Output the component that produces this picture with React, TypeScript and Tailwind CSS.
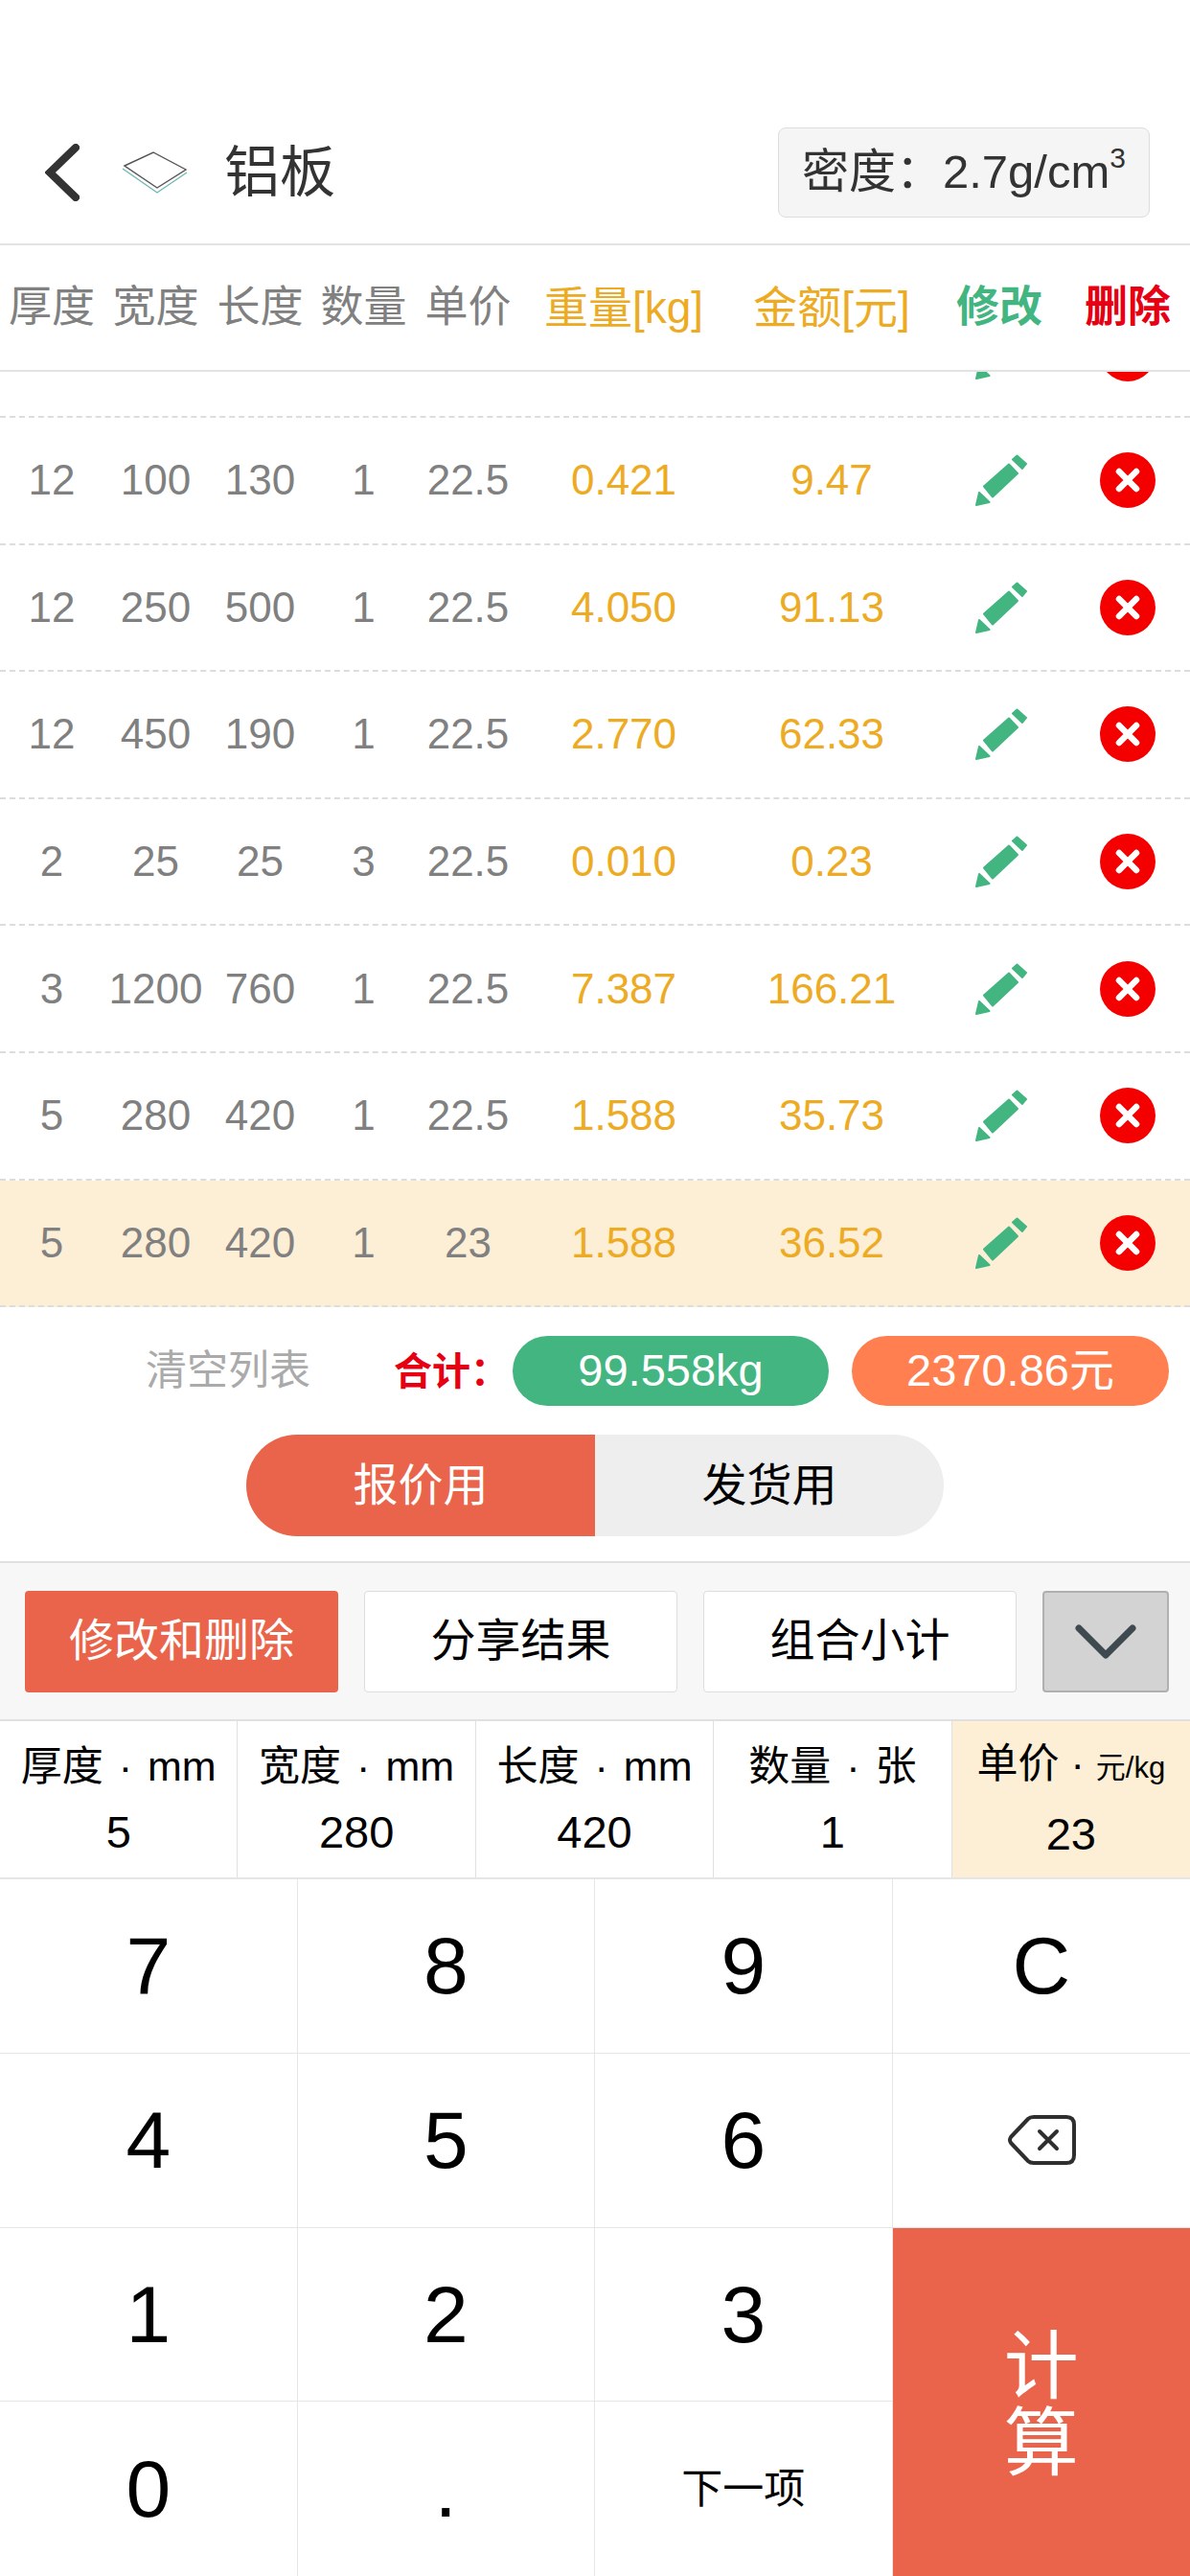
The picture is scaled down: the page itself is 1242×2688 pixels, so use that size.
const rows = [
  { t: '12', w: '100', l: '130', n: '1', p: '22.5', kg: '0.421', amt: '9.47' },
  { t: '12', w: '250', l: '500', n: '1', p: '22.5', kg: '4.050', amt: '91.13' },
  { t: '12', w: '450', l: '190', n: '1', p: '22.5', kg: '2.770', amt: '62.33' },
  { t: '2', w: '25', l: '25', n: '3', p: '22.5', kg: '0.010', amt: '0.23' },
  { t: '3', w: '1200', l: '760', n: '1', p: '22.5', kg: '7.387', amt: '166.21' },
  { t: '5', w: '280', l: '420', n: '1', p: '22.5', kg: '1.588', amt: '35.73' },
  { t: '5', w: '280', l: '420', n: '1', p: '23', kg: '1.588', amt: '36.52', active: true },
];

const cols = 'grid grid-cols-[108px_109px_109px_107px_111px_214px_220px_134px_130px] items-center text-center';

const PencilIcon = () => (
  <svg viewBox="0 0 54 54" className="w-[54px] h-[54px] mx-auto" fill="#43b581" stroke="#43b581" strokeWidth="2" strokeLinejoin="round">
    <path d="M1 53 L4 40 L14.5 50 Z" />
    <path d="M9 33.5 L35 10.5 L44 20 L18 44.5 Z" />
    <path d="M39 5.5 L43.5 1.5 L53 10 L49 15 Z" />
  </svg>
);

const CloseIcon = () => (
  <svg viewBox="0 0 58 58" className="w-[58px] h-[58px] mx-auto">
    <circle cx="29" cy="29" r="29" fill="#f50000" />
    <path d="M20 20 L38 38 M38 20 L20 38" stroke="#fff" strokeWidth="6.5" strokeLinecap="round" />
  </svg>
);

const Row = ({ r }: { r: (typeof rows)[number] }) => (
  <div className={`${cols} h-[132.6px] border-b-2 border-dashed border-[#dddddd] text-[44px] text-[#808080] ${r.active ? 'bg-[#fdeed6]' : ''}`}>
    <div>{r.t}</div>
    <div>{r.w}</div>
    <div>{r.l}</div>
    <div>{r.n}</div>
    <div>{r.p}</div>
    <div className="text-[#edab24]">{r.kg}</div>
    <div className="text-[#edab24]">{r.amt}</div>
    <div><PencilIcon /></div>
    <div><CloseIcon /></div>
  </div>
);

const inputs = [
  { label: '厚度', unit: 'mm', value: '5' },
  { label: '宽度', unit: 'mm', value: '280' },
  { label: '长度', unit: 'mm', value: '420' },
  { label: '数量', unit: '张', value: '1' },
];

const Key = ({ children, className = '' }: { children: React.ReactNode; className?: string }) => (
  <div className={`flex items-center justify-center border-b border-r border-[#e5e5e5] text-[84px] text-black ${className}`}>
    {children}
  </div>
);

export default function App() {
  return (
    <div className="w-[1242px] h-[2688px] overflow-hidden bg-white [font-family:'Liberation_Sans','Noto_Sans_CJK_SC',sans-serif]">
      {/* Header */}
      <div className="flex items-center h-[256px] pt-[105px] pl-[47px] pr-[42px] border-b-2 border-[#e3e3e3]">
        <svg viewBox="0 0 36 60" className="w-[36px] h-[60px]" fill="none" stroke="#333" strokeWidth="8" strokeLinecap="round">
          <path d="M32 4 L5 30 L32 56" />
        </svg>
        <svg viewBox="0 0 70 44" className="ml-[44px] w-[70px] h-[44px]" fill="none" strokeWidth="1.4">
          <path d="M3 15 L33 1 L67 19 L37 38 Z" stroke="#555" />
          <path d="M1 18 L37 43 L68 22" stroke="#6fb9b4" />
        </svg>
        <div className="ml-[37px] text-[58px] text-[#333333]">铝板</div>
        <div className="ml-auto flex items-center justify-center w-[388px] h-[94px] rounded-lg border border-[#dddddd] bg-[#f5f5f5] text-[49px] text-[#333333] whitespace-nowrap">
          密度：2.7g/cm<sup className="text-[30px]">3</sup>
        </div>
      </div>

      {/* Table head */}
      <div className={`${cols} h-[132px] border-b-2 border-[#e3e3e3] text-[45px] text-[#808080] whitespace-nowrap`}>
        <div>厚度</div>
        <div>宽度</div>
        <div>长度</div>
        <div>数量</div>
        <div>单价</div>
        <div className="text-[#edab24] text-[46px]">重量[kg]</div>
        <div className="text-[#edab24] text-[46px]">金额[元]</div>
        <div className="text-[#43b581] font-bold -ml-[4px]">修改</div>
        <div className="text-[#e60012] font-bold">删除</div>
      </div>

      {/* List, scrolled so only the icons of the row above show */}
      <div className="h-[976px] overflow-hidden">
        <div className="h-[48px] overflow-hidden flex flex-col justify-end">
          <div className={`${cols} shrink-0 h-[132.6px] border-b-2 border-dashed border-[#dddddd]`}>
            <div className="col-start-8"><PencilIcon /></div>
            <div><CloseIcon /></div>
          </div>
        </div>
        {rows.map((r, i) => (
          <Row key={i} r={r} />
        ))}
      </div>

      {/* Totals */}
      <div className="flex items-center h-[103px] pt-[30px] pl-[152px] pr-[22px] whitespace-nowrap">
        <div className="text-[43px] text-[#aaaaaa]">清空列表</div>
        <div className="ml-[87px] text-[40px] font-bold text-[#e60012]">合计：</div>
        <div className="ml-auto flex gap-[24px]">
          <div className="flex items-center justify-center w-[330px] h-[73px] rounded-[37px] bg-[#43b581] text-[47px] text-white">99.558kg</div>
          <div className="flex items-center justify-center w-[331px] h-[73px] rounded-[37px] bg-[#ff7f50] text-[47px] text-white">2370.86元</div>
        </div>
      </div>

      {/* Usage toggle */}
      <div className="flex justify-center mt-[30px]">
        <div className="flex w-[728px] h-[106px] rounded-[53px] overflow-hidden text-[47px]">
          <div className="flex-1 flex items-center justify-center bg-[#e9644a] text-white">报价用</div>
          <div className="flex-1 flex items-center justify-center bg-[#eeeeee] text-black">发货用</div>
        </div>
      </div>

      {/* Toolbar */}
      <div className="mt-[26px] h-[167px] border-t-2 border-b-2 border-[#e0e0e0] bg-[#f7f7f7] flex items-center pl-[26px] text-[47px]">
        <div className="flex items-center justify-center w-[327px] h-[106px] rounded bg-[#e9644a] text-white">修改和删除</div>
        <div className="ml-[27px] flex items-center justify-center w-[327px] h-[106px] rounded border border-[#dddddd] bg-white text-black">分享结果</div>
        <div className="ml-[27px] flex items-center justify-center w-[327px] h-[106px] rounded border border-[#dddddd] bg-white text-black">组合小计</div>
        <div className="ml-[27px] flex items-center justify-center w-[132px] h-[106px] rounded border-2 border-[#b0b0b0] bg-[#d3d3d3]">
          <svg viewBox="0 0 64 36" className="w-[64px] h-[36px]" fill="none" stroke="#3f4a50" strokeWidth="7" strokeLinecap="round" strokeLinejoin="round">
            <path d="M4 4 L32 32 L60 4" />
          </svg>
        </div>
      </div>

      {/* Inputs */}
      <div className="grid grid-cols-5 h-[165px] border-b-2 border-[#e5e5e5] text-black text-center">
        {inputs.map((c) => (
          <div key={c.label} className="flex flex-col items-center justify-center gap-[20px] border-r border-[#e0e0e0]">
            <div className="text-[43px] leading-[48px] whitespace-nowrap">
              {c.label}<span className="mx-[16px]">·</span>{c.unit}
            </div>
            <div className="text-[47px] leading-[50px]">{c.value}</div>
          </div>
        ))}
        <div className="flex flex-col items-center justify-center gap-[20px] bg-[#fdeed6]">
          <div className="text-[43px] leading-[48px] whitespace-nowrap">
            单价<span className="mx-[12px]">·</span><span className="text-[31px]">元/kg</span>
          </div>
          <div className="text-[47px] leading-[50px]">23</div>
        </div>
      </div>

      {/* Keypad */}
      <div className="grid grid-cols-4 grid-rows-4 h-[727px]">
        <Key>7</Key>
        <Key>8</Key>
        <Key>9</Key>
        <Key className="border-r-0">C</Key>
        <Key>4</Key>
        <Key>5</Key>
        <Key>6</Key>
        <Key className="border-r-0">
          <svg viewBox="0 0 72 52" className="w-[72px] h-[52px]" fill="none" stroke="#2f2f2f" strokeWidth="4" strokeLinecap="round" strokeLinejoin="round">
            <path d="M22 4 Q24 2 28 2 H62 Q70 2 70 10 V42 Q70 50 62 50 H28 Q24 50 22 48 L4 29 Q2 26 4 23 Z" />
            <path d="M34 17 L52 35 M52 17 L34 35" />
          </svg>
        </Key>
        <Key>1</Key>
        <Key>2</Key>
        <Key>3</Key>
        <div className="row-span-2 flex items-center justify-center pt-[8px] bg-[#e9644a] text-white text-[78px] leading-[80px] text-center">
          计<br />算
        </div>
        <Key className="border-b-0">0</Key>
        <Key className="border-b-0">.</Key>
        <Key className="border-b-0"><span className="text-[43px]">下一项</span></Key>
      </div>
    </div>
  );
}
